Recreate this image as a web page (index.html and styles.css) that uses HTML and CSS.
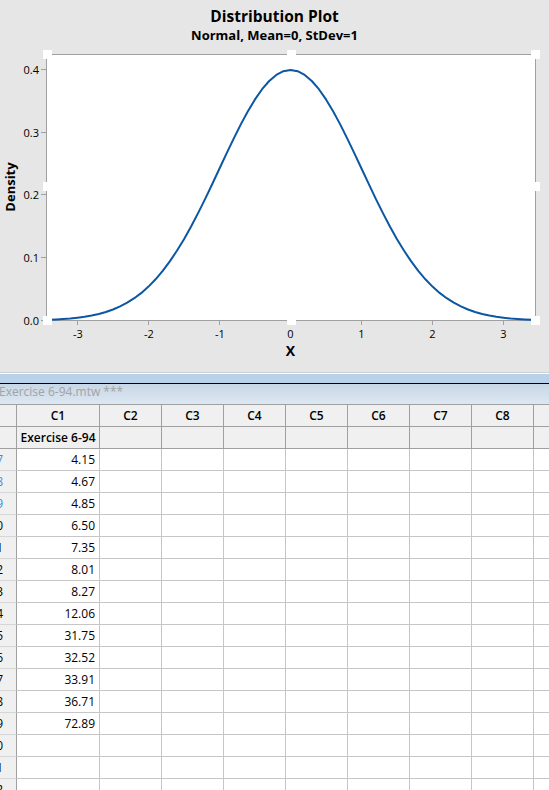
FILE: index.html
```html
<!DOCTYPE html>
<html lang="en">
<head>
<meta charset="utf-8">
<title>Distribution Plot</title>
<link rel="stylesheet" href="styles.css">
</head>
<body>
<section class="graph">
  <header class="graph-title">
    <h1>Distribution Plot</h1>
    <h2>Normal, Mean=0, StDev=1</h2>
  </header>
  <svg class="plot" width="549" height="328" viewBox="0 44 549 328">
    <rect class="plot-bg" x="46.5" y="54.5" width="489" height="266"/>
    <g class="ticks">
      <line x1="41" y1="69.5" x2="46" y2="69.5"/>
      <line x1="41" y1="132.5" x2="46" y2="132.5"/>
      <line x1="41" y1="194.5" x2="46" y2="194.5"/>
      <line x1="41" y1="257.5" x2="46" y2="257.5"/>
      <line x1="41" y1="320.5" x2="46" y2="320.5"/>
      <line x1="77.5" y1="321" x2="77.5" y2="325"/>
      <line x1="148.5" y1="321" x2="148.5" y2="325"/>
      <line x1="219.5" y1="321" x2="219.5" y2="325"/>
      <line x1="290.5" y1="321" x2="290.5" y2="325"/>
      <line x1="361.5" y1="321" x2="361.5" y2="325"/>
      <line x1="432.5" y1="321" x2="432.5" y2="325"/>
      <line x1="503.5" y1="321" x2="503.5" y2="325"/>
    </g>
    <g class="tick-label y-labels">
      <text x="39" y="73.5">0.4</text>
      <text x="39" y="136.5">0.3</text>
      <text x="39" y="198.5">0.2</text>
      <text x="39" y="261.5">0.1</text>
      <text x="39" y="324.5">0.0</text>
    </g>
    <g class="tick-label x-labels">
      <text x="78" y="338">-3</text>
      <text x="149" y="338">-2</text>
      <text x="220" y="338">-1</text>
      <text x="290.5" y="338">0</text>
      <text x="361.5" y="338">1</text>
      <text x="432.5" y="338">2</text>
      <text x="503.5" y="338">3</text>
    </g>
    <text class="axis-title x-title" x="290.5" y="356">X</text>
    <text class="axis-title" transform="translate(14.5,187) rotate(-90)">Density</text>
    <polyline class="curve" points="45.5,319.9 49.1,319.7 56.2,319.4 63.3,319.0 70.4,318.5 77.5,317.7 84.6,316.8 91.7,315.5 98.8,314.0 105.9,312.0 113.0,309.5 120.1,306.4 127.2,302.7 134.3,298.2 141.4,292.9 148.5,286.6 155.6,279.3 162.7,270.9 169.8,261.4 176.9,250.8 184.0,239.2 191.1,226.5 198.2,212.9 205.3,198.6 212.4,183.7 219.5,168.5 226.6,153.4 233.7,138.6 240.8,124.4 247.9,111.2 255.0,99.4 262.1,89.2 269.2,81.0 276.3,74.9 283.4,71.2 290.5,70.0 297.6,71.2 304.7,74.9 311.8,81.0 318.9,89.2 326.0,99.4 333.1,111.2 340.2,124.4 347.3,138.6 354.4,153.4 361.5,168.5 368.6,183.7 375.7,198.6 382.8,212.9 389.9,226.5 397.0,239.2 404.1,250.8 411.2,261.4 418.3,270.9 425.4,279.3 432.5,286.6 439.6,292.9 446.7,298.2 453.8,302.7 460.9,306.4 468.0,309.5 475.1,312.0 482.2,314.0 489.3,315.5 496.4,316.8 503.5,317.7 510.6,318.5 517.7,319.0 524.8,319.4 531.9,319.7 535.5,319.9"/>
    <g class="handles">
      <rect x="43" y="50" width="9" height="9"/>
      <rect x="287" y="50" width="9" height="9"/>
      <rect x="531" y="50" width="9" height="9"/>
      <rect x="43" y="182" width="9" height="9"/>
      <rect x="531" y="182" width="9" height="9"/>
      <rect x="43" y="316" width="9" height="9"/>
      <rect x="287" y="316" width="9" height="9"/>
      <rect x="531" y="316" width="9" height="9"/>
    </g>
  </svg>
</section>

<section class="worksheet">
  <div class="ws-sep"></div>
  <div class="ws-title">Exercise 6-94.mtw ***</div>
  <div class="sheet">
    <div class="row head"><div class="cell rh"></div><div class="cell">C1</div><div class="cell">C2</div><div class="cell">C3</div><div class="cell">C4</div><div class="cell">C5</div><div class="cell">C6</div><div class="cell">C7</div><div class="cell">C8</div><div class="cell">C9</div></div>
    <div class="row name"><div class="cell rh"></div><div class="cell">Exercise 6-94</div><div class="cell"></div><div class="cell"></div><div class="cell"></div><div class="cell"></div><div class="cell"></div><div class="cell"></div><div class="cell"></div><div class="cell"></div></div>
    <div class="row"><div class="cell rh blue">7</div><div class="cell num">4.15</div><div class="cell"></div><div class="cell"></div><div class="cell"></div><div class="cell"></div><div class="cell"></div><div class="cell"></div><div class="cell"></div><div class="cell"></div></div>
    <div class="row"><div class="cell rh blue">8</div><div class="cell num">4.67</div><div class="cell"></div><div class="cell"></div><div class="cell"></div><div class="cell"></div><div class="cell"></div><div class="cell"></div><div class="cell"></div><div class="cell"></div></div>
    <div class="row"><div class="cell rh blue">9</div><div class="cell num">4.85</div><div class="cell"></div><div class="cell"></div><div class="cell"></div><div class="cell"></div><div class="cell"></div><div class="cell"></div><div class="cell"></div><div class="cell"></div></div>
    <div class="row"><div class="cell rh">10</div><div class="cell num">6.50</div><div class="cell"></div><div class="cell"></div><div class="cell"></div><div class="cell"></div><div class="cell"></div><div class="cell"></div><div class="cell"></div><div class="cell"></div></div>
    <div class="row"><div class="cell rh">11</div><div class="cell num">7.35</div><div class="cell"></div><div class="cell"></div><div class="cell"></div><div class="cell"></div><div class="cell"></div><div class="cell"></div><div class="cell"></div><div class="cell"></div></div>
    <div class="row"><div class="cell rh">12</div><div class="cell num">8.01</div><div class="cell"></div><div class="cell"></div><div class="cell"></div><div class="cell"></div><div class="cell"></div><div class="cell"></div><div class="cell"></div><div class="cell"></div></div>
    <div class="row"><div class="cell rh">13</div><div class="cell num">8.27</div><div class="cell"></div><div class="cell"></div><div class="cell"></div><div class="cell"></div><div class="cell"></div><div class="cell"></div><div class="cell"></div><div class="cell"></div></div>
    <div class="row"><div class="cell rh">14</div><div class="cell num">12.06</div><div class="cell"></div><div class="cell"></div><div class="cell"></div><div class="cell"></div><div class="cell"></div><div class="cell"></div><div class="cell"></div><div class="cell"></div></div>
    <div class="row"><div class="cell rh">15</div><div class="cell num">31.75</div><div class="cell"></div><div class="cell"></div><div class="cell"></div><div class="cell"></div><div class="cell"></div><div class="cell"></div><div class="cell"></div><div class="cell"></div></div>
    <div class="row"><div class="cell rh">16</div><div class="cell num">32.52</div><div class="cell"></div><div class="cell"></div><div class="cell"></div><div class="cell"></div><div class="cell"></div><div class="cell"></div><div class="cell"></div><div class="cell"></div></div>
    <div class="row"><div class="cell rh">17</div><div class="cell num">33.91</div><div class="cell"></div><div class="cell"></div><div class="cell"></div><div class="cell"></div><div class="cell"></div><div class="cell"></div><div class="cell"></div><div class="cell"></div></div>
    <div class="row"><div class="cell rh">18</div><div class="cell num">36.71</div><div class="cell"></div><div class="cell"></div><div class="cell"></div><div class="cell"></div><div class="cell"></div><div class="cell"></div><div class="cell"></div><div class="cell"></div></div>
    <div class="row"><div class="cell rh">19</div><div class="cell num">72.89</div><div class="cell"></div><div class="cell"></div><div class="cell"></div><div class="cell"></div><div class="cell"></div><div class="cell"></div><div class="cell"></div><div class="cell"></div></div>
    <div class="row"><div class="cell rh">20</div><div class="cell num"></div><div class="cell"></div><div class="cell"></div><div class="cell"></div><div class="cell"></div><div class="cell"></div><div class="cell"></div><div class="cell"></div><div class="cell"></div></div>
    <div class="row"><div class="cell rh">21</div><div class="cell num"></div><div class="cell"></div><div class="cell"></div><div class="cell"></div><div class="cell"></div><div class="cell"></div><div class="cell"></div><div class="cell"></div><div class="cell"></div></div>
    <div class="row"><div class="cell rh">22</div><div class="cell num"></div><div class="cell"></div><div class="cell"></div><div class="cell"></div><div class="cell"></div><div class="cell"></div><div class="cell"></div><div class="cell"></div><div class="cell"></div></div>
  </div>
</section>
</body>
</html>
```

FILE: styles.css
```css
* {
  box-sizing: border-box;
}

html,
body {
  margin: 0;
  padding: 0;
  height: 790px;
  overflow: hidden;
}

body {
  width: 549px;
  background: #e6e6e6;
  color: #000;
  font-family: "Open Sans", "Noto Sans", "DejaVu Sans", sans-serif;
}

/* ---------- graph window ---------- */
.graph {
  height: 372px;
}

.graph-title {
  height: 44px;
  padding-top: 6px;
  text-align: center;
}

.graph-title h1 {
  margin: 0;
  font-size: 15.5px;
  line-height: 20px;
  font-weight: 700;
}

.graph-title h2 {
  margin: 1px 0 0;
  font-size: 13px;
  line-height: 16px;
  font-weight: 700;
}

.plot {
  display: block;
}

.plot-bg {
  fill: #fff;
  stroke: #a0a0a0;
  stroke-width: 1;
}

.ticks line {
  stroke: #a0a0a0;
  stroke-width: 1;
}

.tick-label {
  font-family: "Open Sans", "Noto Sans", sans-serif;
  font-size: 11px;
  fill: #000;
}

.y-labels {
  text-anchor: end;
}

.x-labels {
  text-anchor: middle;
}

.axis-title {
  font-family: "Open Sans", "Noto Sans", sans-serif;
  font-size: 13px;
  font-weight: 700;
  fill: #000;
  text-anchor: middle;
}

.x-title {
  font-size: 14px;
}

.curve {
  fill: none;
  stroke: #0b57a4;
  stroke-width: 2;
  stroke-linejoin: round;
}

.handles rect {
  fill: #fff;
}

/* ---------- worksheet window ---------- */
.worksheet {
  height: 418px;
  overflow: hidden;
}

.ws-sep {
  height: 12px;
  background: linear-gradient(#d0d0d0 0 1px, #fff 1px 2px, #b9d1ea 2px 11px, #000 11px 12px);
}

.ws-title {
  height: 21px;
  border-bottom: 1px solid #a0a0a0;
  background: linear-gradient(#c8d6e5, #dce7f2);
  color: #a3a3a3;
  font-size: 12px;
  line-height: 15px;
  text-indent: -1px;
  white-space: nowrap;
}

.sheet {
  width: 549px;
  overflow: hidden;
}

.row {
  display: grid;
  grid-template-columns: 17px 83px repeat(8, 62px);
  height: 22px;
}

.cell {
  border-right: 1px solid #c6c6c6;
  border-bottom: 1px solid #c6c6c6;
  background: #fff;
  font-size: 12px;
  line-height: 21px;
  white-space: nowrap;
  overflow: hidden;
}

.head .cell,
.name .cell {
  background: #f0f0f0;
  border-color: #a0a0a0;
  text-align: center;
  font-weight: 600;
}

.rh {
  display: flex;
  justify-content: flex-end;
  padding-right: 13px;
  background: #f0f0f0;
  border-right-color: #a0a0a0;
  border-bottom-color: #d6d6d6;
}

.rh.blue {
  color: #3a8ee2;
}

.num {
  text-align: right;
  padding-right: 4px;
}
```
